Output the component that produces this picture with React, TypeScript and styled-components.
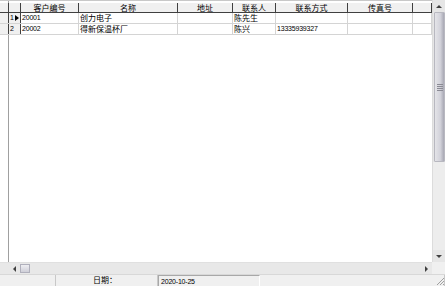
import React from 'react'
import styled, { createGlobalStyle } from 'styled-components'

const GlobalStyle = createGlobalStyle`
  html, body {
    margin: 0;
    padding: 0;
    background: #f0f0f0;
    font-family: "Noto Sans CJK SC", "Liberation Sans", sans-serif;
  }
`

const cols = [9, 12, 58, 99, 55, 43, 72, 65, 19]
const template = cols.map((c) => `${c}px`).join(' ')

const headers = ['', '', '客户编号', '名称', '地址', '联系人', '联系方式', '传真号', '']

const rows = [
  { id: '1', code: '20001', name: '创力电子', addr: '', contact: '陈先生', phone: '', fax: '', current: true },
  { id: '2', code: '20002', name: '得新保温杯厂', addr: '', contact: '陈兴', phone: '13335939327', fax: '', current: false },
]

const Window = styled.div`
  width: 445px;
  height: 286px;
  display: flex;
  flex-direction: column;
  background: #f0f0f0;
  overflow: hidden;
`

const Body = styled.div`
  height: 274px;
  display: grid;
  grid-template-columns: 432px 13px;
  grid-template-rows: 262px 12px;
  background: #fff;
`

const GridArea = styled.div`
  position: relative;
  background: #fff;
  padding-top: 2px;
  border-top: 1px solid #c8c8c8;
  box-sizing: border-box;
  overflow: hidden;
`

const LeftRule = styled.div`
  position: absolute;
  left: 8px;
  top: 0;
  bottom: 0;
  width: 1px;
  background: #a0a0a0;
`

const Row = styled.div<{ $head?: boolean }>`
  position: relative;
  display: grid;
  grid-template-columns: ${template};
  height: ${({ $head }) => ($head ? '10px' : '11px')};
  background: ${({ $head }) => ($head ? '#f0f0f0' : '#fff')};
  border-bottom: 1px solid ${({ $head }) => ($head ? '#404040' : '#d4d4d4')};
  box-sizing: border-box;
`

const Cell = styled.div<{ $head?: boolean; $fixed?: boolean }>`
  box-sizing: border-box;
  border-right: 1px solid ${({ $head, $fixed }) => ($head || $fixed ? '#404040' : '#d4d4d4')};
  background: ${({ $head, $fixed }) => ($head || $fixed ? '#f0f0f0' : '#fff')};
  font-size: ${({ $head }) => ($head ? '8px' : '8px')};
  line-height: ${({ $head }) => ($head ? '9px' : '10px')};
  text-align: ${({ $head }) => ($head ? 'center' : 'left')};
  padding-left: ${({ $head }) => ($head ? '0' : '1px')};
  color: #000;
  white-space: nowrap;
  overflow: hidden;
  display: flex;
  align-items: center;
  justify-content: ${({ $head }) => ($head ? 'center' : 'flex-start')};
`

const Num = styled.span`
  font-family: "Liberation Sans", sans-serif;
  font-size: 7px;
  letter-spacing: -0.2px;
`

const Indicator = styled.span`
  display: flex;
  align-items: center;
  gap: 1px;
  font-family: "Liberation Sans", sans-serif;
  font-size: 7px;
`

const Arrow = styled.span`
  width: 0;
  height: 0;
  border-top: 3px solid transparent;
  border-bottom: 3px solid transparent;
  border-left: 4px solid #000;
`

const VScroll = styled.div`
  display: flex;
  flex-direction: column;
  background: #e6e6e6;
  border-left: 1px solid #dcdcdc;
`

const ArrowBtn = styled.div`
  height: 12px;
  display: flex;
  align-items: center;
  justify-content: center;
  flex-shrink: 0;
`

const VThumb = styled.div`
  height: 150px;
  margin: 0 0 0 1px;
  background: linear-gradient(to right, #e4e4e8, #d2d2da 60%, #a8a8b4);
  border: 1px solid #b8b8c0;
  border-radius: 1px;
  display: flex;
  align-items: center;
  justify-content: center;
  box-sizing: border-box;
`

const Grip = styled.div<{ $vertical?: boolean }>`
  display: flex;
  flex-direction: ${({ $vertical }) => ($vertical ? 'column' : 'row')};
  gap: 1px;
  & > i {
    display: block;
    width: ${({ $vertical }) => ($vertical ? '6px' : '1px')};
    height: ${({ $vertical }) => ($vertical ? '1px' : '6px')};
    background: #8a8a94;
  }
`

const Track = styled.div`
  flex: 1;
  background: #ededed;
`

const HScroll = styled.div`
  display: flex;
  align-items: center;
  background: #e8e8e8;
  padding-left: 8px;
  border-top: 1px solid #e0e0e0;
`

const HBtn = styled.div`
  width: 12px;
  height: 10px;
  display: flex;
  align-items: center;
  justify-content: center;
  flex-shrink: 0;
`

const HThumb = styled.div`
  width: 10px;
  height: 9px;
  background: linear-gradient(#eeeef2, #cfcfd8);
  border: 1px solid #b0b0bc;
  box-sizing: border-box;
  flex-shrink: 0;
`

const HTrack = styled.div`
  flex: 1;
`

const Corner = styled.div`
  background: #f0f0f0;
`

const StatusBar = styled.div`
  height: 12px;
  display: grid;
  grid-template-columns: 56px 102px 102px 1fr;
  border-top: 1px solid #d8d8d8;
  background: #f0f0f0;
  box-sizing: border-box;
  position: relative;
`

const Panel = styled.div<{ $sunken?: boolean; $right?: boolean }>`
  box-sizing: border-box;
  font-size: 8px;
  line-height: 10px;
  color: #000;
  padding-left: 2px;
  text-align: ${({ $right }) => ($right ? 'right' : 'left')};
  padding-right: ${({ $right }) => ($right ? '40px' : '0')};
  border-right: 1px solid #c8c8c8;
  ${({ $sunken }) => ($sunken ? 'border-left: 1px solid #a8a8a8; border-top: 1px solid #a8a8a8; border-right: 1px solid #fff;' : '')}
  white-space: nowrap;
`

const SizeGrip = styled.svg`
  position: absolute;
  right: 0;
  bottom: 0;
`

const Tri = ({ dir }: { dir: 'up' | 'down' | 'left' | 'right' }) => {
  const pts = {
    up: '0,4 3,1 6,4',
    down: '0,1 6,1 3,4',
    left: '4,0 1,3 4,6',
    right: '1,0 4,3 1,6',
  }[dir]
  const w = dir === 'up' || dir === 'down' ? 6 : 5
  const h = dir === 'up' || dir === 'down' ? 5 : 6
  return (
    <svg width={w} height={h} viewBox={`0 0 ${w} ${h}`}>
      <polygon points={pts} fill="#404040" />
    </svg>
  )
}

const isNum = (s: string) => /^[0-9]+$/.test(s)

export default function App() {
  return (
    <>
      <GlobalStyle />
      <Window>
        <Body>
          <GridArea>
            <LeftRule />
            <Row $head>
              {headers.map((h, i) => (
                <Cell key={i} $head>
                  {h}
                </Cell>
              ))}
            </Row>
            {rows.map((r) => (
              <Row key={r.id}>
                <Cell $fixed />
                <Cell $fixed>
                  <Indicator>
                    {r.id}
                    {r.current && <Arrow />}
                  </Indicator>
                </Cell>
                {[r.code, r.name, r.addr, r.contact, r.phone, r.fax, ''].map((v, i) => (
                  <Cell key={i}>{isNum(v) ? <Num>{v}</Num> : v}</Cell>
                ))}
              </Row>
            ))}
          </GridArea>
          <VScroll>
            <ArrowBtn>
              <Tri dir="up" />
            </ArrowBtn>
            <VThumb>
              <Grip $vertical>
                <i />
                <i />
                <i />
                <i />
              </Grip>
            </VThumb>
            <Track />
            <ArrowBtn>
              <Tri dir="down" />
            </ArrowBtn>
          </VScroll>
          <HScroll>
            <HBtn>
              <Tri dir="left" />
            </HBtn>
            <HThumb />
            <HTrack />
            <HBtn>
              <Tri dir="right" />
            </HBtn>
          </HScroll>
          <Corner />
        </Body>
        <StatusBar>
          <Panel />
          <Panel $right>日期：</Panel>
          <Panel $sunken>
            <Num>2020-10-25</Num>
          </Panel>
          <Panel />
          <SizeGrip width="10" height="10" viewBox="0 0 10 10">
            <path d="M9 2 L2 9 M9 5 L5 9 M9 8 L8 9" stroke="#a0a0a0" strokeWidth="1" />
          </SizeGrip>
        </StatusBar>
      </Window>
    </>
  )
}
